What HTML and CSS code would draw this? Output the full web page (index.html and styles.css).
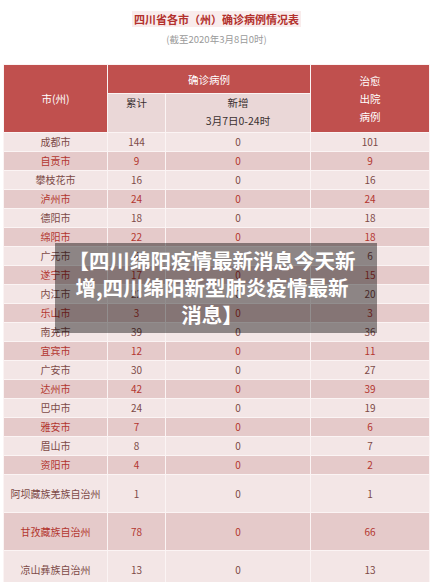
FILE: index.html
```html
<!DOCTYPE html>
<html lang="zh-CN">
<head>
<meta charset="utf-8">
<title>四川省各市（州）确诊病例情况表</title>
<link rel="stylesheet" href="styles.css">
</head>
<body>
<div class="page">
  <header class="caption">
    <h1 class="title"><span>四川省各市（州）确诊病例情况表</span></h1>
    <p class="subtitle">(截至2020年3月8日0时)</p>
  </header>
  <div class="table-wrap">
    <table class="stats">
      <colgroup>
        <col class="c-city"><col class="c-total"><col class="c-new"><col class="c-cured">
      </colgroup>
      <thead>
        <tr class="h1">
          <th rowspan="2" class="hd-red">市(州)</th>
          <th colspan="2" class="hd-red">确诊病例</th>
          <th rowspan="2" class="hd-red hd-multi">治愈<br>出院<br>病例</th>
        </tr>
        <tr class="h2">
          <th class="hd-sub">累计</th>
          <th class="hd-sub">新增<br>3月7日0-24时</th>
        </tr>
      </thead>
      <tbody>
        <tr class="lt"><td>成都市</td><td>144</td><td>0</td><td>101</td></tr>
        <tr class="dk"><td>自贡市</td><td>9</td><td>0</td><td>9</td></tr>
        <tr class="lt"><td>攀枝花市</td><td>16</td><td>0</td><td>16</td></tr>
        <tr class="dk"><td>泸州市</td><td>24</td><td>0</td><td>24</td></tr>
        <tr class="lt"><td>德阳市</td><td>18</td><td>0</td><td>18</td></tr>
        <tr class="dk"><td>绵阳市</td><td>22</td><td>0</td><td>18</td></tr>
        <tr class="lt"><td>广元市</td><td>6</td><td>0</td><td>6</td></tr>
        <tr class="dk"><td>遂宁市</td><td>17</td><td>0</td><td>15</td></tr>
        <tr class="lt"><td>内江市</td><td>22</td><td>0</td><td>20</td></tr>
        <tr class="dk"><td>乐山市</td><td>3</td><td>0</td><td>3</td></tr>
        <tr class="lt"><td>南充市</td><td>39</td><td>0</td><td>36</td></tr>
        <tr class="dk"><td>宜宾市</td><td>12</td><td>0</td><td>11</td></tr>
        <tr class="lt"><td>广安市</td><td>30</td><td>0</td><td>27</td></tr>
        <tr class="dk"><td>达州市</td><td>42</td><td>0</td><td>39</td></tr>
        <tr class="lt"><td>巴中市</td><td>24</td><td>0</td><td>19</td></tr>
        <tr class="dk"><td>雅安市</td><td>7</td><td>0</td><td>6</td></tr>
        <tr class="lt"><td>眉山市</td><td>8</td><td>0</td><td>7</td></tr>
        <tr class="dk"><td>资阳市</td><td>4</td><td>0</td><td>2</td></tr>
        <tr class="lt tall"><td>阿坝藏族羌族自治州</td><td>1</td><td>0</td><td>1</td></tr>
        <tr class="dk tall"><td>甘孜藏族自治州</td><td>78</td><td>0</td><td>66</td></tr>
        <tr class="lt tall"><td>凉山彝族自治州</td><td>13</td><td>0</td><td>13</td></tr>
      </tbody>
    </table>
    <div class="overlay">【四川绵阳疫情最新消息今天新<br>增,四川绵阳新型肺炎疫情最新<br>消息】</div>
  </div>
</div>
</body>
</html>
```
FILE: styles.css
```css
html, body {
  margin: 0;
  padding: 0;
  background: #ffffff;
}
body {
  font-family: "Noto Sans CJK SC", "Noto Sans", sans-serif;
}
.page {
  width: 433px;
  height: 582px;
  overflow: hidden;
}
.caption {
  text-align: center;
  padding-top: 11px;
}
.title {
  margin: 0;
  font-size: 11px;
  line-height: 16px;
  font-weight: 700;
  color: #b3312d;
}
.title span {
  background: #f9ecec;
  padding: 0 2px;
}
.subtitle {
  margin: 5px 0 0;
  font-size: 9.5px;
  line-height: 14px;
  color: #9a9a9a;
}
.table-wrap {
  position: relative;
  margin: 18px 4px 0 3px;
}
.stats {
  width: 426px;
  table-layout: fixed;
  border-collapse: collapse;
  font-size: 10px;
}
.c-city { width: 104px; }
.c-total { width: 58px; }
.c-new { width: 145px; }
.c-cured { width: 119px; }
.stats th, .stats td {
  padding: 0;
  text-align: center;
  border: 1px solid #fbf4f4;
  font-weight: 400;
}
.hd-red {
  background: #c0504e;
  color: #ffffff;
  border-color: #c0504e;
  font-size: 10.5px;
}
.hd-multi {
  line-height: 18px;
}
.h1 { height: 29px; }
.h2 { height: 39px; }
.hd-sub {
  background: #ead7d7;
  color: #3a3030;
  vertical-align: top;
  padding-top: 4px;
  line-height: 18px;
  font-size: 10.5px;
}
.stats tbody tr { height: 19px; }
.stats tbody tr.tall { height: 38px; }
.stats td { line-height: 14px; }
.lt { background: #f3e6e6; color: #7d4a47; }
.dk { background: #e5caca; color: #b3362f; }
.overlay {
  position: absolute;
  left: 52px;
  top: 179px;
  width: 322px;
  height: 90px;
  box-sizing: border-box;
  padding: 4px 14px 0 6px;
  background: rgba(0, 0, 0, 0.42);
  color: #ffffff;
  font-size: 20.5px;
  line-height: 27px;
  font-weight: 700;
  text-align: center;
  white-space: nowrap;
}
```
